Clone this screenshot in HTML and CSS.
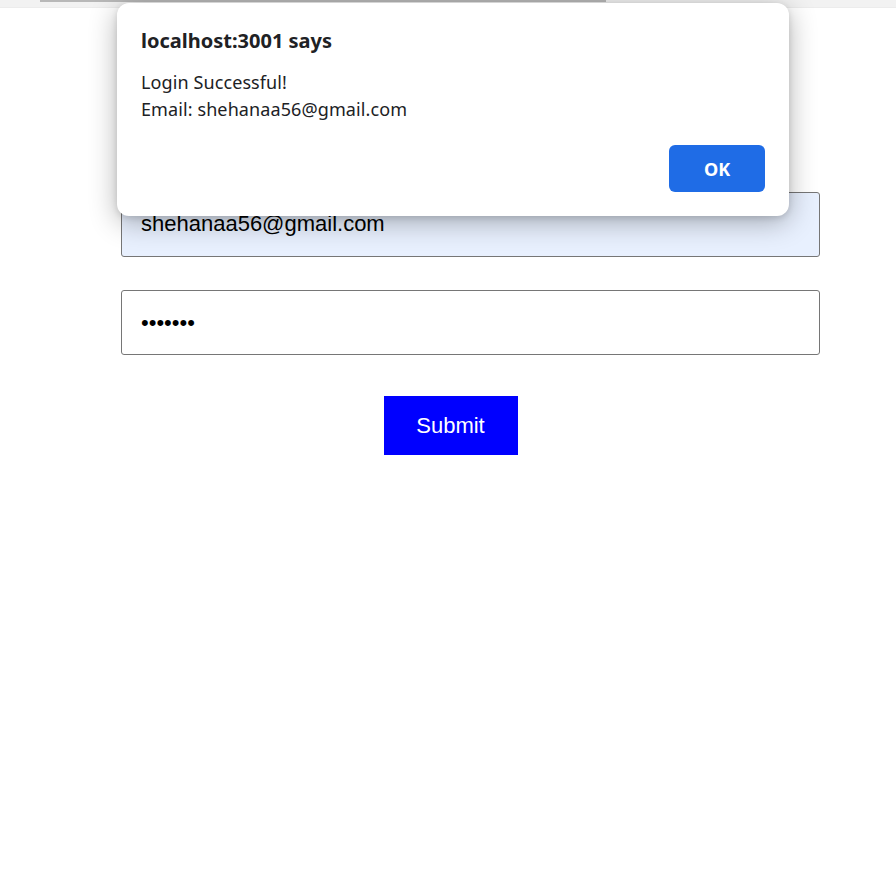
FILE: index.html
```html
<!DOCTYPE html>
<html>
<head>
<meta charset="utf-8">
<link rel="stylesheet" href="styles.css">
</head>
<body>
<div class="topbar"><div class="topline"></div></div>
<form class="login">
  <input class="field email" type="text" value="shehanaa56@gmail.com">
  <input class="field" type="password" value="abcdefg">
  <div class="actions"><button type="button" class="submit">Submit</button></div>
</form>
<div class="dialog">
  <div class="dlg-title">localhost:3001 says</div>
  <div class="dlg-msg">Login Successful!<br>Email: shehanaa56@gmail.com</div>
  <div class="dlg-actions"><button type="button" class="ok">OK</button></div>
</div>
</body>
</html>
```
FILE: styles.css
```css
html, body { margin: 0; padding: 0; background: #fff; }
body { width: 896px; height: 884px; overflow: hidden; position: relative; }
.topbar { height: 7px; background: #f2f2f2; border-bottom: 1px solid #ececec; }
.topline { margin-left: 40px; width: 566px; height: 2px; background: #b8b8b8; }
.login { margin: 184px 0 0 121px; width: 699px; display: flex; flex-direction: column; gap: 33px; }
.field {
  box-sizing: border-box; width: 699px; height: 65px; margin: 0;
  border: 1px solid #767676; border-radius: 3px; padding: 0 19px;
  font-family: "Liberation Sans", Arial, sans-serif; font-size: 22px; color: #000;
  background: #fff; outline: none;
}
.email { background: #e8f0fe; padding-bottom: 2px; }
.actions { display: flex; justify-content: center; margin-top: 8px; }
.submit {
  width: 134px; height: 59px; margin-right: 40px; border: none; background: #0000ff; color: #fff;
  font-family: "Liberation Sans", Arial, sans-serif; font-size: 22px;
}
.dialog {
  position: absolute; left: 117px; top: 3px; width: 672px; height: 213px;
  box-sizing: border-box; padding: 25px 24px 0 24px; background: #fff; border-radius: 12px;
  box-shadow: 0 6px 28px rgba(0,0,0,0.30), 0 2px 6px rgba(0,0,0,0.12);
  font-family: "Noto Sans", "Open Sans", sans-serif; color: #202124;
}
.dlg-title { font-size: 20px; font-weight: 700; line-height: 26px; }
.dlg-msg { margin-top: 15px; font-size: 18px; line-height: 27px; letter-spacing: 0.1px; }
.dlg-actions { display: flex; justify-content: flex-end; margin-top: 22px; }
.ok {
  width: 96px; height: 47px; border: none; border-radius: 6px; background: #1f6ce6; color: #fff;
  font-family: "Noto Sans", "Open Sans", sans-serif; font-size: 18px; font-weight: 700;
}
```
